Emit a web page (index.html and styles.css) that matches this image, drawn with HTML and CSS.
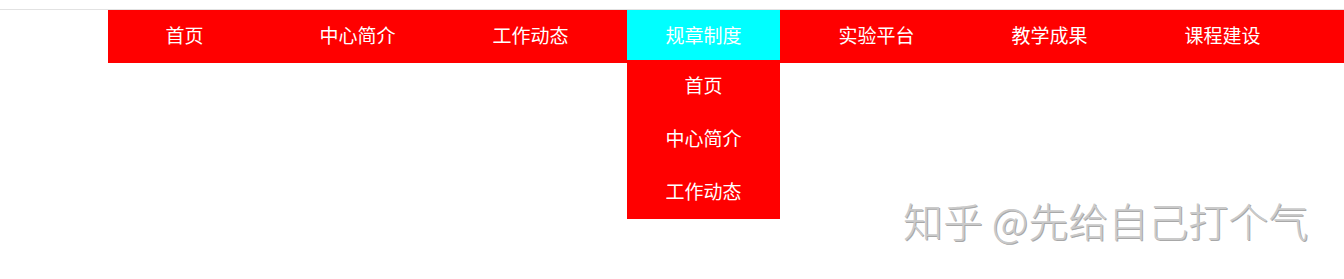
FILE: index.html
```html
<!DOCTYPE html>
<html lang="zh-CN">
<head>
<meta charset="utf-8">
<title>导航</title>
<link rel="stylesheet" href="styles.css">
</head>
<body>
<div class="page">
  <div class="rule"></div>
  <ul class="nav">
    <li class="item">首页</li>
    <li class="item">中心简介</li>
    <li class="item">工作动态</li>
    <li class="item active">规章制度
      <ul class="drop">
        <li class="sub">首页</li>
        <li class="sub">中心简介</li>
        <li class="sub">工作动态</li>
      </ul>
    </li>
    <li class="item">实验平台</li>
    <li class="item">教学成果</li>
    <li class="item">课程建设</li>
  </ul>
  <div class="mark">知乎 @先给自己打个气</div>
</div>
</body>
</html>
```
FILE: styles.css
```css
html, body {
  margin: 0;
  padding: 0;
  background: #fff;
}
.page {
  position: relative;
  width: 1344px;
  height: 279px;
  padding-top: 9px;
  box-sizing: border-box;
  font-family: "Noto Sans CJK SC", "Microsoft YaHei", sans-serif;
}
.rule {
  height: 1px;
  background: #e2e2e2;
}
.nav {
  list-style: none;
  margin: 0 0 0 108px;
  padding: 0;
  height: 53px;
  background: #ff0000;
  display: flex;
  gap: 20px;
}
.item {
  position: relative;
  width: 153px;
  height: 50px;
  line-height: 50px;
  text-align: center;
  color: #fff;
  font-size: 19px;
}
.item.active {
  background: #00ffff;
}
.drop {
  position: absolute;
  top: 50px;
  left: 0;
  width: 153px;
  margin: 0;
  padding: 0;
  list-style: none;
  background: #ff0000;
}
.sub {
  height: 53px;
  line-height: 50px;
  text-align: center;
  color: #fff;
  font-size: 19px;
}
.mark {
  position: absolute;
  left: 903px;
  top: 200px;
  font-size: 40px;
  font-weight: 300;
  line-height: 1;
  color: #cacaca;
  text-shadow: 1px 1px 0 #a8a8a8;
  white-space: nowrap;
}
```
